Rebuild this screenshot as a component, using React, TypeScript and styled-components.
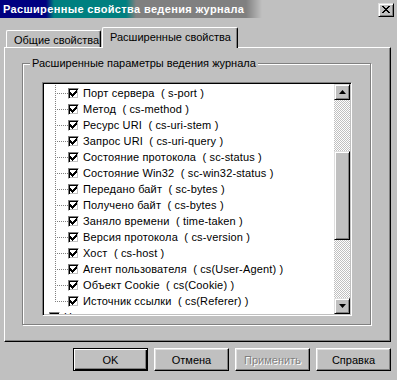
import React from "react";
import styled, { createGlobalStyle, css } from "styled-components";

// W3C extended logging fields shown in the tree
const fields: [string, string][] = [
  ["Порт сервера", "s-port"],
  ["Метод", "cs-method"],
  ["Ресурс URI", "cs-uri-stem"],
  ["Запрос URI", "cs-uri-query"],
  ["Состояние протокола", "sc-status"],
  ["Состояние Win32", "sc-win32-status"],
  ["Передано байт", "sc-bytes"],
  ["Получено байт", "cs-bytes"],
  ["Заняло времени", "time-taken"],
  ["Версия протокола", "cs-version"],
  ["Хост", "cs-host"],
  ["Агент пользователя", "cs(User-Agent)"],
  ["Объект Cookie", "cs(Cookie)"],
  ["Источник ссылки", "cs(Referer)"],
];

const CHECK = [
  [6, 0, 1],
  [5, 1, 2],
  [0, 2, 1],
  [4, 2, 3],
  [0, 3, 2],
  [3, 3, 3],
  [0, 4, 5],
  [1, 5, 3],
  [2, 6, 1],
];

const CLOSE = [
  [0, 0, 2, 6, 0, 2],
  [1, 1, 2, 5, 1, 2],
  [2, 2, 4],
  [3, 3, 2],
  [2, 4, 4],
  [1, 5, 2, 5, 5, 2],
  [0, 6, 2, 6, 6, 2],
];

const CheckMark = () => (
  <svg width="7" height="7" viewBox="0 0 7 7" shapeRendering="crispEdges">
    {CHECK.map(([x, y, w], i) => (
      <rect key={i} x={x} y={y} width={w} height={1} fill="#000" />
    ))}
  </svg>
);

const CloseGlyph = () => (
  <svg width="8" height="7" viewBox="0 0 8 7" shapeRendering="crispEdges">
    {CLOSE.map((r, i) => (
      <React.Fragment key={i}>
        <rect x={r[0]} y={r[1]} width={r[2]} height={1} fill="#000" />
        {r.length > 3 && <rect x={r[3]} y={r[4]} width={r[5]} height={1} fill="#000" />}
      </React.Fragment>
    ))}
  </svg>
);

const Arrow = ({ down }: { down?: boolean }) => (
  <svg width="7" height="4" viewBox="0 0 7 4">
    <polygon points={down ? "0,0 7,0 3.5,4" : "3.5,0 7,4 0,4"} fill="#000" />
  </svg>
);

const Checkbox = () => (
  <Box>
    <CheckMark />
  </Box>
);

const App: React.FC = () => {
  return (
    <>
      <GlobalStyle />
      <Window>
        <TitleBar>
          <Title>Расширенные свойства ведения журнала</Title>
          <CloseButton>
            <CloseGlyph />
          </CloseButton>
        </TitleBar>

        <Body>
          <TabRow>
            <Tab $width={95}>Общие свойства</Tab>
            <Tab $width={136} $active>
              Расширенные свойства
            </Tab>
          </TabRow>

          <Panel>
            <Group>
              <Legend>Расширенные параметры ведения журнала</Legend>
              <Tree>
                <Items>
                  {fields.map(([name, code], i) => (
                    <Row key={code} $level={1}>
                      <Connector $last={i === fields.length - 1} />
                      <Checkbox />
                      <Label>{`${name}  ( ${code} )`}</Label>
                    </Row>
                  ))}
                  <Row $level={0}>
                    <Checkbox />
                    <Label>Нагрузка процессов</Label>
                  </Row>
                </Items>
                <ScrollBar>
                  <ScrollButton>
                    <Arrow />
                  </ScrollButton>
                  <Track>
                    <Thumb $offset={51} $size={89} />
                  </Track>
                  <ScrollButton>
                    <Arrow down />
                  </ScrollButton>
                </ScrollBar>
              </Tree>
            </Group>
          </Panel>

          <Buttons>
            <Button $default>OK</Button>
            <Button>Отмена</Button>
            <Button disabled>Применить</Button>
            <Button>Справка</Button>
          </Buttons>
        </Body>
      </Window>
    </>
  );
};

export default App;

//
// --------------------- STYLED COMPONENTS ---------------------
//

const GlobalStyle = createGlobalStyle`
  html, body {
    margin: 0;
    padding: 0;
    background: #c0c0c0;
  }
  body {
    font-family: "Liberation Sans", Arial, sans-serif;
    font-size: 11px;
    color: #000;
  }
`;

const raised = css`
  border: 1px solid;
  border-color: #dfdfdf #000 #000 #dfdfdf;
  box-shadow: inset 1px 1px #fff, inset -1px -1px #808080;
  background: #c0c0c0;
`;

const Window = styled.div`
  width: 397px;
  height: 380px;
  background: #c0c0c0;
  display: flex;
  flex-direction: column;
  overflow: hidden;
`;

const TitleBar = styled.div`
  height: 18px;
  flex: none;
  display: flex;
  align-items: center;
  justify-content: space-between;
  padding: 0 3px 0 3px;
  background: linear-gradient(
    to right,
    #000080 0 46px,
    #008080 54px 126px,
    #808080 136px 246px,
    #c0c0c0 262px
  );
`;

const Title = styled.div`
  color: #fff;
  font-weight: bold;
  font-size: 11px;
  letter-spacing: 0.35px;
  white-space: nowrap;
`;

const CloseButton = styled.div`
  ${raised};
  width: 16px;
  height: 14px;
  box-sizing: border-box;
  display: flex;
  align-items: center;
  justify-content: center;
  margin-top: 1px;
`;

const Body = styled.div`
  padding: 9px 0 0 4px;
`;

const TabRow = styled.div`
  display: flex;
  align-items: flex-end;
  height: 20px;
  padding-left: 2px;
  position: relative;
  z-index: 1;
`;

const Tab = styled.div<{ $active?: boolean; $width: number }>`
  width: ${(p) => p.$width}px;
  height: 17px;
  box-sizing: border-box;
  border: 1px solid;
  border-color: #fff #000 transparent #fff;
  border-bottom: none;
  border-radius: 2px 2px 0 0;
  box-shadow: inset -1px 0 #808080;
  background: #c0c0c0;
  padding: 1px 0 0 7px;
  white-space: nowrap;
  display: flex;
  align-items: center;

  ${(p) =>
    p.$active &&
    css`
      height: 21px;
      margin-bottom: -1px;
      margin-left: 1px;
      padding: 0 0 3px 7px;
    `}
`;

const Panel = styled.div`
  width: 387px;
  height: 295px;
  box-sizing: border-box;
  border: 1px solid;
  border-color: #fff #000 #000 #fff;
  box-shadow: inset -1px -1px #808080;
  display: flex;
  flex-direction: column;
`;

const Group = styled.fieldset`
  width: 349px;
  box-sizing: border-box;
  margin: 9px 0 0 17px;
  padding: 0;
  min-inline-size: 0;
  border: 1px solid #808080;
  box-shadow: inset 1px 1px #fff, 1px 1px 0 #fff;
`;

const Legend = styled.legend`
  margin-left: 7px;
  padding: 0 2px;
  line-height: 13px;
  background: #c0c0c0;
  white-space: nowrap;
`;

const Tree = styled.div`
  width: 310px;
  height: 234px;
  box-sizing: border-box;
  margin: 12px 0 8px 19px;
  border: 1px solid;
  border-color: #808080 #fff #fff #808080;
  box-shadow: inset 1px 1px #000, inset -1px -1px #c0c0c0;
  padding: 1px;
  background: #fff;
  display: flex;
`;

const Items = styled.div`
  flex: 1;
  overflow: hidden;
  padding-top: 1px;
  display: flex;
  flex-direction: column;
`;

const Row = styled.div<{ $level: number }>`
  height: 16px;
  flex: none;
  display: flex;
  align-items: center;
  padding-left: ${(p) => (p.$level ? 11 : 5)}px;
`;

const Connector = styled.span<{ $last?: boolean }>`
  align-self: stretch;
  width: 13px;
  flex: none;
  background:
    repeating-linear-gradient(to bottom, #808080 0 1px, transparent 1px 2px)
      0 0 / 1px ${(p) => (p.$last ? "9px" : "100%")} no-repeat,
    repeating-linear-gradient(to right, #808080 0 1px, transparent 1px 2px)
      2px 8px / 11px 1px no-repeat;
`;

const Box = styled.span`
  width: 11px;
  height: 11px;
  flex: none;
  box-sizing: border-box;
  border: 1px solid;
  border-color: #808080 #fff #fff #808080;
  box-shadow: inset 1px 1px #000, inset -1px -1px #c0c0c0;
  background: #fff;
  display: flex;
  align-items: center;
  justify-content: center;
`;

const Label = styled.span`
  margin-left: 4px;
  white-space: pre;
  line-height: 16px;
  letter-spacing: 0.15px;
`;

const ScrollBar = styled.div`
  width: 16px;
  flex: none;
  display: flex;
  flex-direction: column;
`;

const ScrollButton = styled.div`
  ${raised};
  width: 16px;
  height: 16px;
  box-sizing: border-box;
  flex: none;
  display: flex;
  align-items: center;
  justify-content: center;
`;

const Track = styled.div`
  flex: 1;
  background: repeating-conic-gradient(#fff 0 25%, #c0c0c0 0 50%) 0 0 / 2px 2px;
`;

const Thumb = styled.div<{ $offset: number; $size: number }>`
  ${raised};
  box-sizing: border-box;
  margin-top: ${(p) => p.$offset}px;
  height: ${(p) => p.$size}px;
`;

const Buttons = styled.div`
  display: flex;
  gap: 6px;
  margin-top: 6px;
  padding-left: 69px;
`;

const Button = styled.button<{ $default?: boolean }>`
  width: 75px;
  height: 23px;
  box-sizing: border-box;
  padding: 0;
  font-family: "Liberation Sans", Arial, sans-serif;
  font-size: 11px;
  font-weight: 400;
  color: #000;
  background: #c0c0c0;
  border: 1px solid;
  border-color: #fff #000 #000 #fff;
  box-shadow: inset -1px -1px #808080, inset 1px 1px #dfdfdf;

  ${(p) =>
    p.$default &&
    css`
      border-color: #000;
      box-shadow: inset 1px 1px #fff, inset -1px -1px #000,
        inset -2px -2px #808080;
    `}

  &:disabled {
    color: #808080;
    text-shadow: 1px 1px #fff;
  }
`;
